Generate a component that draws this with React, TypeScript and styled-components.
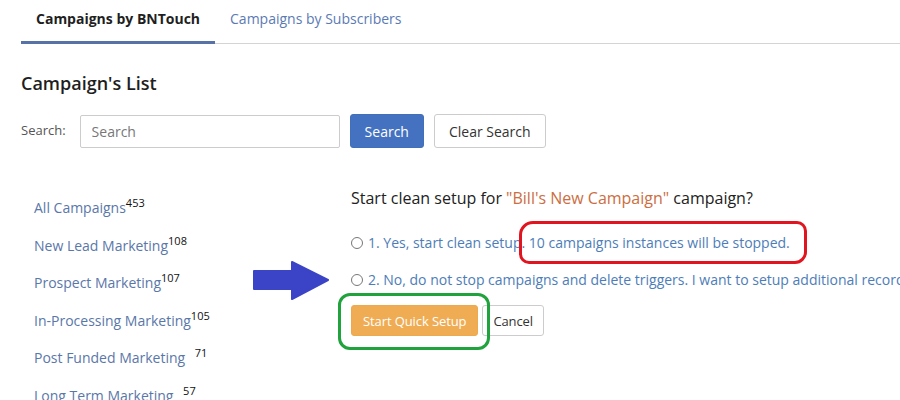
import React from "react";
import styled, { createGlobalStyle } from "styled-components";

const Global = createGlobalStyle`
  html, body { margin: 0; padding: 0; background: #fff; overflow: hidden; }
  body { font-family: "Open Sans", "Noto Sans", sans-serif; color: #222; width: 900px; height: 400px; }
  * { box-sizing: border-box; }
`;

const Page = styled.div`
  padding-left: 21px;
  width: 900px;
  height: 400px;
  overflow: hidden;
`;

const Tabs = styled.nav`
  display: flex;
  height: 44px;
  border-bottom: 1px solid #d4d4d4;
`;

const Tab = styled.div<{ $active?: boolean }>`
  padding: 9px 15px 0;
  font-size: 14px;
  font-weight: ${(p) => (p.$active ? 700 : 400)};
  color: ${(p) => (p.$active ? "#1f1f1f" : "#5b7ab4")};
  border-bottom: 3px solid ${(p) => (p.$active ? "#5672a6" : "transparent")};
  margin-bottom: -1px;
  white-space: nowrap;
`;

const Heading = styled.h2`
  margin: 27px 0 0;
  font-size: 18px;
  font-weight: 600;
  color: #1e1e1e;
  line-height: 24px;
`;

const SearchRow = styled.div`
  display: flex;
  align-items: center;
  margin-top: 19px;
  gap: 10px;
`;

const Label = styled.span`
  font-size: 13px;
  color: #555;
  margin-right: 8px;
  margin-top: -3px;
`;

const Input = styled.input`
  width: 260px;
  height: 33px;
  border: 1px solid #ccc;
  border-radius: 2px;
  padding: 0 11px;
  font-family: inherit;
  font-size: 14px;
  color: #555;
  margin-left: -4px;
  &::placeholder { color: #777; }
`;

const Button = styled.button<{ $variant: "primary" | "default" | "warning" }>`
  font-family: inherit;
  font-size: 14px;
  height: 34px;
  padding: 0 14px;
  border-radius: 3px;
  cursor: pointer;
  white-space: nowrap;
  border: 1px solid
    ${(p) => (p.$variant === "primary" ? "#4270b8" : p.$variant === "warning" ? "#eea94f" : "#ccc")};
  background: ${(p) => (p.$variant === "primary" ? "#4472c0" : p.$variant === "warning" ? "#f0ac52" : "#fff")};
  color: ${(p) => (p.$variant === "default" ? "#333" : "#fff")};
`;

const SmallButton = styled(Button)`
  font-size: 13px;
  height: 31px;
  padding: 0 ${(p) => (p.$variant === "warning" ? "11px" : "10px")};
  letter-spacing: -0.1px;
`;

const Main = styled.div`
  display: grid;
  grid-template-columns: 330px 1fr;
  margin-top: 38px;
`;

const CategoryList = styled.ul`
  list-style: none;
  margin: 0;
  padding: 12px 0 0 13px;
  display: flex;
  flex-direction: column;
  gap: 17.5px;
`;

const Category = styled.li`
  font-size: 14px;
  color: #5a77a9;
  line-height: 20px;
  height: 20px;
  white-space: nowrap;
`;

const Count = styled.sup<{ $gap?: boolean }>`
  color: #111;
  font-size: 11px;
  line-height: 0;
  vertical-align: 0;
  position: relative;
  top: -6px;
  margin-left: ${(p) => (p.$gap ? "6px" : "0")};
`;

const Setup = styled.div`
  position: relative;
  white-space: nowrap;
`;

const Question = styled.div`
  font-size: 16px;
  color: #222;
  line-height: 24px;
`;

const Highlight = styled.span`
  color: #cc6e3f;
`;

const Options = styled.div`
  margin-top: 24px;
  display: flex;
  flex-direction: column;
  gap: 19px;
`;

const Option = styled.label`
  display: flex;
  align-items: center;
  font-size: 14px;
  color: #4d7db8;
  line-height: 18px;
  position: relative;
`;

const Radio = styled.span`
  width: 12px;
  height: 12px;
  border: 1px solid #777;
  border-radius: 50%;
  margin-right: 5px;
  flex: none;
`;

const Circled = styled.span`
  position: relative;
  &::after {
    content: "";
    position: absolute;
    left: -10px;
    right: -17px;
    top: -13px;
    bottom: -12px;
    border: 3.5px solid #e01520;
    border-radius: 14px 10px 12px 10px;
  }
`;

const Actions = styled.div`
  display: flex;
  gap: 4px;
  margin-top: 16px;
  align-items: flex-start;
`;

const Boxed = styled.span`
  position: relative;
  display: inline-flex;
  &::after {
    content: "";
    position: absolute;
    left: -13px;
    right: -12px;
    top: -12px;
    bottom: -14px;
    border: 3.5px solid #20a23c;
    border-radius: 12px;
  }
`;

const Arrow = styled.svg`
  position: absolute;
  left: -99px;
  top: -10px;
`;

export default function App() {
  return (
    <Page>
      <Global />
      <Tabs>
        <Tab $active>Campaigns by BNTouch</Tab>
        <Tab>Campaigns by Subscribers</Tab>
      </Tabs>
      <Heading>Campaign's List</Heading>
      <SearchRow>
        <Label>Search:</Label>
        <Input placeholder="Search" />
        <Button $variant="primary">Search</Button>
        <Button $variant="default">Clear Search</Button>
      </SearchRow>
      <Main>
        <CategoryList>
          <Category>All Campaigns<Count>453</Count></Category>
          <Category>New Lead Marketing<Count>108</Count></Category>
          <Category>Prospect Marketing<Count>107</Count></Category>
          <Category>In-Processing Marketing<Count>105</Count></Category>
          <Category>Post Funded Marketing <Count $gap>71</Count></Category>
          <Category>Long Term Marketing <Count $gap>57</Count></Category>
        </CategoryList>
        <Setup>
          <Question>
            Start clean setup for <Highlight>"Bill's New Campaign"</Highlight> campaign?
          </Question>
          <Options>
            <Option>
              <Radio />
              1. Yes, start clean setup.&nbsp;<Circled>10 campaigns instances will be stopped.</Circled>
            </Option>
            <Option>
              <Arrow width="78" height="40" viewBox="0 0 78 40">
                <path d="M2 10 L40 10 L40 1 L76 19 L40 38 L40 28 L2 28 Z" fill="#3b43c6" stroke="#3b43c6" strokeWidth="2" strokeLinejoin="round" />
              </Arrow>
              <Radio />
              2. No, do not stop campaigns and delete triggers. I want to setup additional records.
            </Option>
          </Options>
          <Actions>
            <Boxed>
              <SmallButton $variant="warning">Start Quick Setup</SmallButton>
            </Boxed>
            <SmallButton $variant="default">Cancel</SmallButton>
          </Actions>
        </Setup>
      </Main>
    </Page>
  );
}
